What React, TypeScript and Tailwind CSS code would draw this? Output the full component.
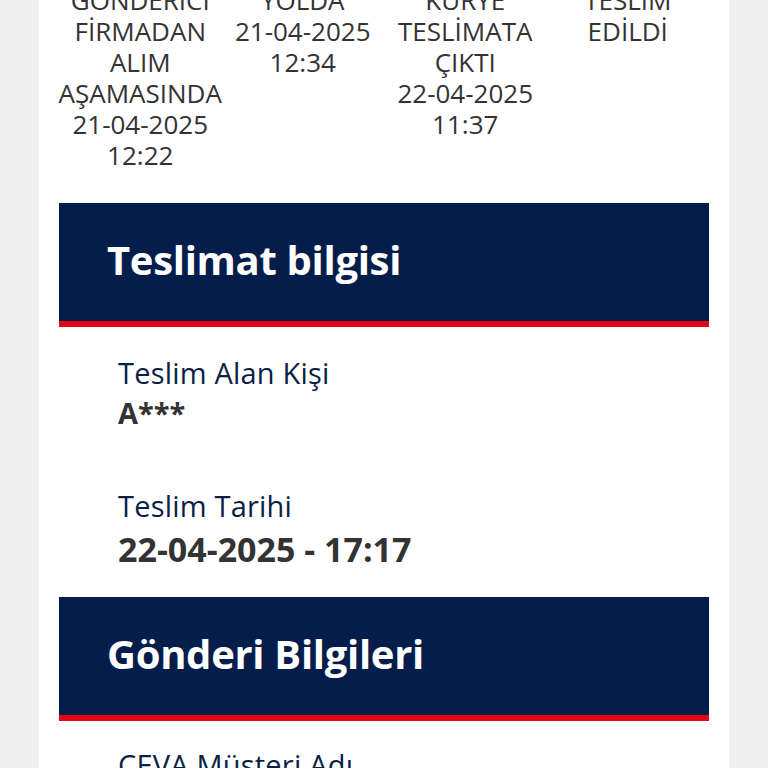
import React from "react";

const steps = [
  ["GÖNDERİCİ", "FİRMADAN", "ALIM", "AŞAMASINDA", "21-04-2025", "12:22"],
  ["YOLDA", "21-04-2025", "12:34"],
  ["KURYE", "TESLİMATA", "ÇIKTI", "22-04-2025", "11:37"],
  ["TESLİM", "EDİLDİ"],
];

function SectionHeader({ title }: { title: string }) {
  return (
    <div className="flex h-[124px] items-center border-b-[6px] border-[#e30613] bg-[#051d4b] pb-[4px] pl-[48px]">
      <h2 className="text-[40px] font-bold leading-none tracking-[-0.3px] text-white">{title}</h2>
    </div>
  );
}

export default function App() {
  return (
    <div
      className="h-screen overflow-hidden bg-[#efefef]"
      style={{ fontFamily: '"Open Sans", "Noto Sans", sans-serif' }}
    >
      <div className="mx-[39px] h-[820px] bg-white px-[20px]">
        <div className="mt-[-15px] grid grid-cols-4 text-center text-[26px] leading-[31px] text-[#333333]">
          {steps.map((lines, i) => (
            <div key={i} className="flex flex-col items-center">
              {lines.map((l, j) => (
                <span key={j}>{l}</span>
              ))}
            </div>
          ))}
        </div>

        <div className="mt-[32px]">
          <SectionHeader title="Teslimat bilgisi" />
        </div>

        <div className="flex flex-col pl-[59px] pt-[27px] pb-[24px]">
          <span className="text-[29px] leading-[38px] tracking-[0.2px] text-[#0a1f44]">Teslim Alan Kişi</span>
          <span className="text-[29px] font-bold leading-[42px] text-[#333333]">A***</span>
          <span className="mt-[53px] text-[29px] leading-[38px] tracking-[0.2px] text-[#0a1f44]">Teslim Tarihi</span>
          <span className="text-[34px] font-bold leading-[48px] text-[#333333]">22-04-2025 - 17:17</span>
        </div>

        <SectionHeader title="Gönderi Bilgileri" />

        <div className="pl-[59px] pt-[25px]">
          <span className="text-[29px] leading-[38px] tracking-[0.2px] text-[#0a1f44]">CEVA Müşteri Adı</span>
        </div>
      </div>
    </div>
  );
}
